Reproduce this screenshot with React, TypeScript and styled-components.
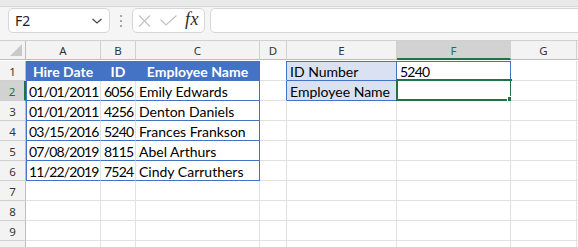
import React from 'react';
import styled, { createGlobalStyle, css } from 'styled-components';

const BLUE = '#4472c4';
const LIGHT_BLUE = '#d9e1f2';
const GREEN = '#217346';
const GRID = '#e1e1e1';
const HEAD_LINE = '#d0d0d0';

const Global = createGlobalStyle`
  html, body { margin: 0; padding: 0; background: #ffffff; overflow: hidden; }
  body { font-family: Lato, "Liberation Sans", sans-serif; }
`;

const Page = styled.div`
  width: 578px;
  height: 247px;
  overflow: hidden;
  display: flex;
  flex-direction: column;
  background: #ffffff;
`;

const TopStrip = styled.div`
  flex: none;
  height: 6px;
  background: #e9e9e9;
  border-bottom: 1px solid #d9d9d9;
`;

const FormulaBar = styled.div`
  flex: none;
  height: 33px;
  box-sizing: border-box;
  background: #f5f5f5;
  display: flex;
  align-items: flex-start;
  padding: 1px 0 0 8px;
  overflow: hidden;
`;

const Box = styled.div`
  flex: none;
  box-sizing: border-box;
  height: 25px;
  background: #ffffff;
  border: 1px solid #d6d6d6;
  border-radius: 5px;
  display: flex;
  align-items: center;
`;

const NameBox = styled(Box)`
  width: 102px;
  justify-content: space-between;
  padding: 0 6px 0 6px;
  font-family: "Noto Sans", "Open Sans", sans-serif;
  font-size: 14px;
  color: #1f1f1f;
`;

const Dots = styled.div`
  flex: none;
  width: 22px;
  height: 25px;
  display: flex;
  flex-direction: column;
  align-items: center;
  justify-content: center;
  gap: 3px;
  span {
    width: 2px;
    height: 2px;
    background: #8a8a8a;
    border-radius: 1px;
  }
`;

const FxBox = styled(Box)`
  width: 73px;
  padding: 0 4px 0 5px;
  gap: 9px;
`;

const Fx = styled.span`
  font-family: "Liberation Serif", "DejaVu Serif", serif;
  font-style: italic;
  font-size: 18px;
  color: #2b2b2b;
  letter-spacing: 0.5px;
  margin-top: -3px;
  margin-left: -1px;
`;

const FormulaInput = styled(Box)`
  margin-left: 5px;
  width: 400px;
`;

const Sheet = styled.div`
  display: grid;
  grid-template-columns: 26px 75px 35px 124px 27px 110px 114px 66px 1fr;
  grid-auto-rows: 20px;
  border-top: 1px solid ${HEAD_LINE};
`;

const headerText = css`
  font-family: "Noto Sans", "Open Sans", sans-serif;
  font-size: 11.5px;
  display: flex;
  align-items: center;
  justify-content: center;
  box-sizing: border-box;
`;

const Corner = styled.div`
  ${headerText};
  position: relative;
  background: #f3f3f3;
  border-right: 1px solid #bdbdbd;
  border-bottom: 1px solid #bdbdbd;
  height: 19px;
  &::after {
    content: '';
    position: absolute;
    right: 3px;
    bottom: 3px;
    width: 0;
    height: 0;
    border-left: 12px solid transparent;
    border-bottom: 12px solid #c9c9c9;
  }
`;

const ColHeader = styled.div<{ $active?: boolean }>`
  ${headerText};
  height: 19px;
  background: ${(p) => (p.$active ? '#d2d2d2' : '#f3f3f3')};
  color: ${(p) => (p.$active ? GREEN : '#333333')};
  border-right: 1px solid ${HEAD_LINE};
  border-bottom: ${(p) => (p.$active ? `2px solid ${GREEN}` : '1px solid #bdbdbd')};
  padding-top: ${(p) => (p.$active ? '1px' : '0')};
`;

const RowHeader = styled.div<{ $active?: boolean }>`
  ${headerText};
  background: ${(p) => (p.$active ? '#d2d2d2' : '#f3f3f3')};
  color: ${(p) => (p.$active ? GREEN : '#333333')};
  border-right: ${(p) => (p.$active ? `2px solid ${GREEN}` : '1px solid #bdbdbd')};
  border-bottom: 1px solid ${HEAD_LINE};
  padding-top: 1px;
`;

type CellStyle = {
  $fill?: string;
  $color?: string;
  $bold?: boolean;
  $align?: 'left' | 'right' | 'center';
  $num?: boolean;
  $bb?: boolean;
  $br?: boolean;
  $bl?: boolean;
  $bt?: boolean;
};

const Cell = styled.div<CellStyle>`
  position: relative;
  box-sizing: border-box;
  background: ${(p) => p.$fill || '#ffffff'};
  color: ${(p) => p.$color || '#000000'};
  font-weight: ${(p) => (p.$bold ? 700 : 400)};
  font-size: 14px;
  line-height: 19px;
  letter-spacing: ${(p) => (p.$num ? '-0.8px' : 'normal')};
  padding: 1px 3px 0 3px;
  text-align: ${(p) => p.$align || 'left'};
  white-space: nowrap;
  border-right: 1px solid ${(p) => (p.$br ? BLUE : GRID)};
  border-bottom: 1px solid ${(p) => (p.$bb ? BLUE : GRID)};
  box-shadow: ${(p) =>
    [p.$bl ? `inset 1px 0 0 ${BLUE}` : '', p.$bt ? `inset 0 1px 0 ${BLUE}` : '']
      .filter(Boolean)
      .join(', ') || 'none'};
`;

const Selection = styled.div`
  position: absolute;
  top: -2px;
  left: -1px;
  right: -2px;
  bottom: -1px;
  border: 2px solid ${GREEN};
  pointer-events: none;
`;

const Handle = styled.div`
  position: absolute;
  right: -4px;
  bottom: -4px;
  width: 5px;
  height: 5px;
  background: ${GREEN};
  border: 1px solid #ffffff;
`;

const columns = ['A', 'B', 'C', 'D', 'E', 'F', 'G', ''];

const people = [
  ['01/01/2011', '6056', 'Emily Edwards'],
  ['01/01/2011', '4256', 'Denton Daniels'],
  ['03/15/2016', '5240', 'Frances Frankson'],
  ['07/08/2019', '8115', 'Abel Arthurs'],
  ['11/22/2019', '7524', 'Cindy Carruthers'],
];

function Chevron() {
  return (
    <svg width="12" height="8" viewBox="0 0 12 8">
      <polyline points="1.5,2 6,6 10.5,2" fill="none" stroke="#444" strokeWidth="1.2" />
    </svg>
  );
}

function CancelIcon() {
  return (
    <svg width="13" height="12" viewBox="0 0 13 12">
      <path d="M1 0.5 L12 11.5 M12 0.5 L1 11.5" stroke="#c2c2c2" strokeWidth="1.2" fill="none" />
    </svg>
  );
}

function EnterIcon() {
  return (
    <svg width="17" height="11" viewBox="0 0 17 11">
      <polyline points="0.5,4.5 6,10 16.5,0.5" stroke="#c2c2c2" strokeWidth="1.2" fill="none" />
    </svg>
  );
}

export default function App() {
  const rows: React.ReactNode[] = [];

  rows.push(
    <React.Fragment key="r1">
      <RowHeader>1</RowHeader>
      <Cell $fill={BLUE} $color="#ffffff" $bold $align="center" $bb $br>Hire Date</Cell>
      <Cell $fill={BLUE} $color="#ffffff" $bold $align="center" $bb $br>ID</Cell>
      <Cell $fill={BLUE} $color="#ffffff" $bold $align="center" $bb $br>Employee Name</Cell>
      <Cell $br />
      <Cell $fill={LIGHT_BLUE} $bt $bb $br>ID Number</Cell>
      <Cell $num $bt $bb $br>5240</Cell>
      <Cell />
      <Cell />
    </React.Fragment>
  );

  people.forEach(([date, id, name], i) => {
    const r = i + 2;
    const isTwo = r === 2;
    rows.push(
      <React.Fragment key={`r${r}`}>
        <RowHeader $active={isTwo}>{r}</RowHeader>
        <Cell $num $align="right" $bl $bb>{date}</Cell>
        <Cell $num $align="right" $bb>{id}</Cell>
        <Cell $bb $br>{name}</Cell>
        <Cell $br={isTwo} />
        {isTwo ? (
          <>
            <Cell $fill={LIGHT_BLUE} $bb $br>Employee Name</Cell>
            <Cell $bb $br>
              <Selection>
                <Handle />
              </Selection>
            </Cell>
          </>
        ) : (
          <>
            <Cell />
            <Cell />
          </>
        )}
        <Cell />
        <Cell />
      </React.Fragment>
    );
  });

  for (let r = 7; r <= 10; r++) {
    rows.push(
      <React.Fragment key={`r${r}`}>
        <RowHeader>{r}</RowHeader>
        {columns.map((c, j) => (
          <Cell key={j} />
        ))}
      </React.Fragment>
    );
  }

  return (
    <>
      <Global />
      <Page>
        <TopStrip />
        <FormulaBar>
          <NameBox>
            <span>F2</span>
            <Chevron />
          </NameBox>
          <Dots>
            <span />
            <span />
            <span />
          </Dots>
          <FxBox>
            <CancelIcon />
            <EnterIcon />
            <Fx>fx</Fx>
          </FxBox>
          <FormulaInput />
        </FormulaBar>
        <Sheet>
          <Corner />
          {columns.map((c, j) => (
            <ColHeader key={j} $active={c === 'F'}>{c}</ColHeader>
          ))}
          {rows}
        </Sheet>
      </Page>
    </>
  );
}
